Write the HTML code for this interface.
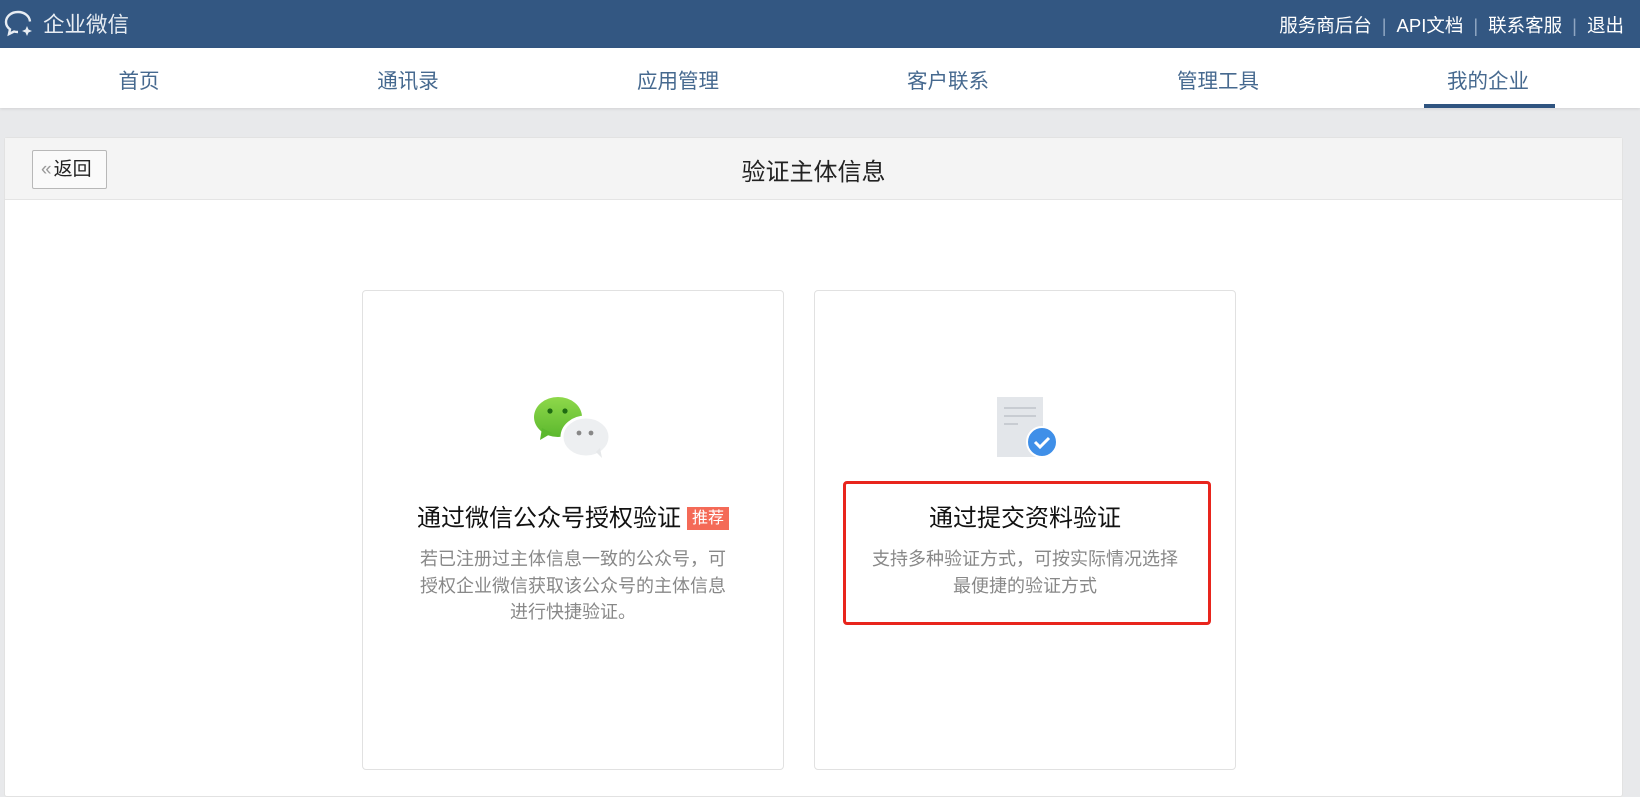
<!DOCTYPE html>
<html><head><meta charset="utf-8"><style>
*{margin:0;padding:0;box-sizing:border-box}
body{width:1640px;height:780px;overflow:hidden;background:#e8e9eb;font-family:"Liberation Sans","Noto Sans CJK SC",sans-serif;position:relative}
.top{position:absolute;left:0;top:0;width:1640px;height:48px;background:#335782;color:#fff}
.logo{position:absolute;left:4px;top:8px;display:flex;align-items:center;font-size:21.5px;color:#e8edf3}
.links{position:absolute;right:16px;top:12px;font-size:18.5px;color:#fff}
.links span.sep{color:#8fa6c2;margin:0 10px}
.nav{position:absolute;left:0;top:48px;width:1640px;height:60px;background:#fff;box-shadow:0 1px 3px rgba(0,0,0,.1)}
.nav div{position:absolute;top:16px;font-size:20.5px;color:#46698f;transform:translateX(-50%)}
.ul{position:absolute;left:1424px;top:104px;width:131px;height:4px;background:#2f5480}
.panel{position:absolute;left:4px;top:137px;width:1619px;height:660px;background:#fff;border:1px solid #e2e2e2;border-radius:3px}
.ph{height:62px;background:#f4f4f4;border-bottom:1px solid #e4e4e4;position:relative}
.back{position:absolute;left:27px;top:12px;width:75px;height:39px;border:1px solid #b8b8b8;border-radius:2px;background:#fafafa;font-size:19px;line-height:37px;padding-left:8px;color:#222}
.back i{font-style:normal;color:#999;margin-right:2px}
.pt{position:absolute;left:0;right:0;top:14px;text-align:center;font-size:24px;color:#222}
.card{position:absolute;top:290px;width:422px;height:480px;border:1px solid #e1e1e1;border-radius:4px;background:#fff;text-align:center}
.ct{position:absolute;left:0;right:0;top:207px;font-size:24px;color:#111}
.cd{position:absolute;left:0;right:0;top:255px;font-size:18px;line-height:26.5px;color:#888}
.tag{display:inline-block;background:#f46a57;color:#fff;font-size:16px;padding:0 5px;vertical-align:3px;margin-left:6px;line-height:23px}
.red{position:absolute;left:843px;top:481px;width:368px;height:144px;border:3px solid #e8251d;border-radius:4px}
</style></head><body>
<div class="top">
<div class="logo"><svg width="30" height="30" viewBox="0 0 30 30"><path d="M14 3C7 3 2 7.5 2 13c0 3 1.5 5.5 4 7.3L5 25l5-2.5c1.3.4 2.6.5 4 .5" fill="none" stroke="#e8edf3" stroke-width="2.4"/><path d="M14 3c6.5 0 11.5 4 12 9.5" fill="none" stroke="#e8edf3" stroke-width="2.4"/><path d="M23 17l1.5 3.5 3.5 1.5-3.5 1.5L23 27l-1.5-3.5L18 22l3.5-1.5z" fill="#e8edf3"/></svg><span style="margin-left:9px">企业微信</span></div>
<div class="links">服务商后台<span class="sep">|</span>API文档<span class="sep">|</span>联系客服<span class="sep">|</span>退出</div>
</div>
<div class="nav">
<div style="left:139px">首页</div><div style="left:408px">通讯录</div><div style="left:678px">应用管理</div><div style="left:948px">客户联系</div><div style="left:1218px">管理工具</div><div style="left:1488px">我的企业</div>
</div>
<div class="ul"></div>
<div class="panel">
<div class="ph"><div class="back"><i>«</i>返回</div><div class="pt">验证主体信息</div></div>
</div>
<div class="card" style="left:362px">
<svg style="position:absolute;left:171px;top:105px" width="78" height="62" viewBox="0 0 78 62"><defs><linearGradient id="g" x1="0" y1="0" x2="0" y2="1"><stop offset="0" stop-color="#8ed84a"/><stop offset="1" stop-color="#5cb82e"/></linearGradient></defs><ellipse cx="24" cy="21" rx="24" ry="20" fill="url(#g)"/><path d="M8 32l-2 12 12-7z" fill="#5cb82e"/><circle cx="16" cy="15" r="2.6" fill="#1f6b12"/><circle cx="31" cy="15" r="2.6" fill="#1f6b12"/><ellipse cx="52" cy="41" rx="24" ry="20" fill="#edeff1" stroke="#fff" stroke-width="3"/><path d="M62 56l6 6-2-10z" fill="#e6e8ea"/><circle cx="45" cy="37" r="2.4" fill="#888"/><circle cx="57" cy="37" r="2.4" fill="#888"/></svg>
<div class="ct">通过微信公众号授权验证<span class="tag">推荐</span></div>
<div class="cd">若已注册过主体信息一致的公众号，可<br>授权企业微信获取该公众号的主体信息<br>进行快捷验证。</div>
</div>
<div class="card" style="left:814px">
<svg style="position:absolute;left:182px;top:106px" width="62" height="62" viewBox="0 0 62 62"><rect x="0" y="0" width="46" height="60" fill="#e3e6ea"/><rect x="7" y="10" width="32" height="2" fill="#c8ccd2"/><rect x="7" y="18" width="32" height="2" fill="#c8ccd2"/><rect x="7" y="26" width="14" height="2" fill="#c8ccd2"/><circle cx="45" cy="45" r="15" fill="#3f8fe8" stroke="#fff" stroke-width="2"/><path d="M38 45l5 5 9-9" fill="none" stroke="#fff" stroke-width="3"/></svg>
<div class="ct">通过提交资料验证</div>
<div class="cd">支持多种验证方式，可按实际情况选择<br>最便捷的验证方式</div>
</div>
<div class="red"></div>
</body></html>
